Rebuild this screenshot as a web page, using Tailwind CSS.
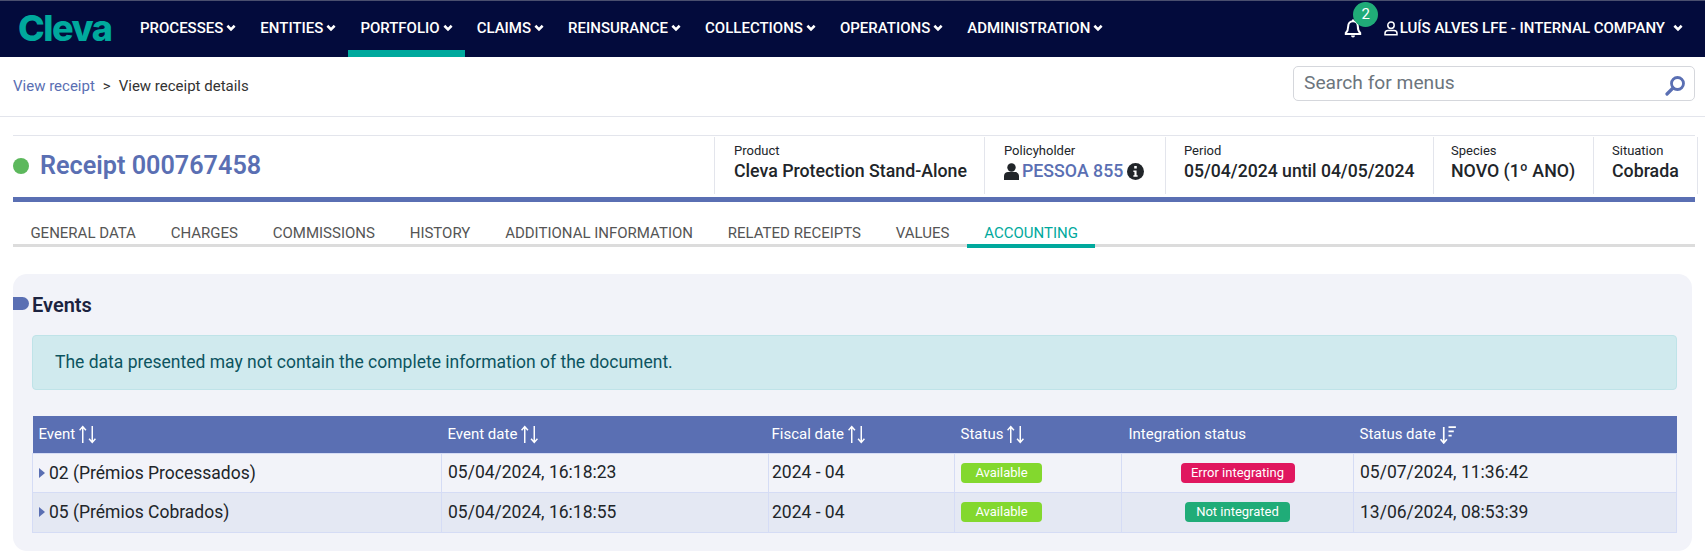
<!DOCTYPE html>
<html><head><meta charset="utf-8">
<script src="https://cdn.jsdelivr.net/npm/@tailwindcss/browser@4"></script>
</head>
<body class="bg-white font-['Roboto',sans-serif] text-[#212529] w-[1705px] h-[555px] overflow-hidden">
<nav class="h-[57px] bg-[#030b3c] border-t border-[#4a4f6e] flex items-start relative">
  <div class="w-[128px] pl-[18px] h-[56px] flex items-center font-['Inter',sans-serif] font-extrabold text-[36px] tracking-[-1.5px] text-[#00a99d] pb-[3px]">Cleva</div>
  <div class="flex text-white text-[15px] font-medium h-[56px]">
    <a class="px-3 h-full flex items-center gap-[3px] pb-[1px]">PROCESSES<svg width="10" height="8" viewBox="0 0 11 8" class="mt-[-2px]"><path d="M1.500 1.500l4 4 4-4" fill="none" stroke="#fff" stroke-width="2.800"/></svg></a>
    <a class="px-3 h-full flex items-center gap-[3px] pb-[1px]">ENTITIES<svg width="10" height="8" viewBox="0 0 11 8" class="mt-[-2px]"><path d="M1.500 1.500l4 4 4-4" fill="none" stroke="#fff" stroke-width="2.800"/></svg></a>
    <a class="px-3 h-full flex items-center gap-[3px] pt-[6px] border-b-[7px] border-[#00a99d]">PORTFOLIO<svg width="10" height="8" viewBox="0 0 11 8" class="mt-[-2px]"><path d="M1.500 1.500l4 4 4-4" fill="none" stroke="#fff" stroke-width="2.800"/></svg></a>
    <a class="px-3 h-full flex items-center gap-[3px] pb-[1px]">CLAIMS<svg width="10" height="8" viewBox="0 0 11 8" class="mt-[-2px]"><path d="M1.500 1.500l4 4 4-4" fill="none" stroke="#fff" stroke-width="2.800"/></svg></a>
    <a class="px-3 h-full flex items-center gap-[3px] pb-[1px]">REINSURANCE<svg width="10" height="8" viewBox="0 0 11 8" class="mt-[-2px]"><path d="M1.500 1.500l4 4 4-4" fill="none" stroke="#fff" stroke-width="2.800"/></svg></a>
    <a class="px-3 h-full flex items-center gap-[3px] pb-[1px]">COLLECTIONS<svg width="10" height="8" viewBox="0 0 11 8" class="mt-[-2px]"><path d="M1.500 1.500l4 4 4-4" fill="none" stroke="#fff" stroke-width="2.800"/></svg></a>
    <a class="px-3 h-full flex items-center gap-[3px] pb-[1px]">OPERATIONS<svg width="10" height="8" viewBox="0 0 11 8" class="mt-[-2px]"><path d="M1.500 1.500l4 4 4-4" fill="none" stroke="#fff" stroke-width="2.800"/></svg></a>
    <a class="px-3 h-full flex items-center gap-[3px] pb-[1px]">ADMINISTRATION<svg width="10" height="8" viewBox="0 0 11 8" class="mt-[-2px]"><path d="M1.500 1.500l4 4 4-4" fill="none" stroke="#fff" stroke-width="2.800"/></svg></a>
  </div>
  <div class="ml-auto flex items-center h-[56px] pb-[1px] text-white text-[15px] font-medium pr-[22px]">
    <div class="relative mr-[22px]">
      <svg width="18" height="19" viewBox="0 0 18 19" class="block"><path d="M9 2.200c-3 0-4.800 2.200-4.800 5 0 4-1 5.400-2.400 6.800v.9h14.400V14c-1.400-1.400-2.400-2.800-2.400-6.800 0-2.800-1.800-5-4.800-5z" fill="none" stroke="#fff" stroke-width="2"/><path d="M7 16.500a2 2 0 0 0 4 0z" fill="#fff"/><rect x="8" y="0.500" width="2" height="2.500" fill="#fff"/></svg>
      <span class="absolute left-[9.500px] top-[-17px] w-[25px] h-[25px] rounded-full bg-[#20ac78] text-[15px] font-normal flex items-center justify-center">2</span>
    </div>
    <svg width="14" height="15" viewBox="0 0 14 15" class="mr-[2px]"><circle cx="7" cy="4.200" r="3.200" fill="none" stroke="#fff" stroke-width="1.500"/><path d="M1 13.800v-1.300c0-2 1.600-3 3-3h6c1.400 0 3 1 3 3v1.300z" fill="none" stroke="#fff" stroke-width="1.500"/></svg>
    <span>LUÍS ALVES LFE - INTERNAL COMPANY</span>
    <svg width="10" height="8" viewBox="0 0 11 8" class="ml-[8px] mt-[-2px]"><path d="M1.500 1.500l4 4 4-4" fill="none" stroke="#fff" stroke-width="2.800"/></svg>
  </div>
</nav>
<div class="h-[59px] border-b border-[#e3e5ec] flex items-center justify-between pl-[13px] pr-[10px] box-content">
  <div class="text-[15px] flex items-center pb-[1px]"><span class="text-[#5a6fb3]">View receipt</span><span class="mx-[8px] text-[#333]">&gt;</span><span class="text-[#333]">View receipt details</span></div>
  <div class="w-[402px] h-[35px] border border-[#d5d7dc] rounded-[5px] flex items-center justify-between pl-[10px] pr-[8px] text-[19.200px] text-[#6c757d] mb-[6px]">Search for menus
    <svg width="21" height="21" viewBox="0 0 21 21" class="mt-[4px]"><circle cx="12.500" cy="8.500" r="6" fill="none" stroke="#5a6fb3" stroke-width="2.800"/><path d="M8 13l-6 6" stroke="#5a6fb3" stroke-width="3.200" stroke-linecap="round"/></svg>
  </div>
</div>
<section class="ml-[13px] mr-[10px] mt-[18px] border-t border-[#e3e5ec] border-b-[5px] border-b-[#5a6fb3] h-[67px] flex items-stretch box-border">
  <div class="w-[701px] shrink-0 flex items-center pb-[2px]">
    <span class="w-[16px] h-[16px] rounded-full bg-[#5cb85c]"></span>
    <span class="ml-[11px] text-[25.200px] font-semibold text-[#5a6fb3]">Receipt 000767458</span>
  </div>
  <div class="flex items-center h-[57px] border-l border-[#e3e5ec] mt-[1px]">
    <div class="w-[270px] shrink-0 pl-[19px] border-r border-[#e3e5ec] h-full pt-[6px]"><p class="text-[13px] leading-[15px]">Product</p><p class="text-[17.750px] leading-[20px] mt-[3px] font-medium">Cleva Protection Stand-Alone</p></div>
    <div class="w-[181px] shrink-0 pl-[19px] border-r border-[#e3e5ec] h-full pt-[6px]"><p class="text-[13px] leading-[15px]">Policyholder</p><p class="text-[17.750px] leading-[20px] mt-[3px] font-medium text-[#5a6fb3] flex items-center gap-[3px]"><svg width="15" height="17" viewBox="0 0 15 17"><circle cx="7.500" cy="4.500" r="4.200" fill="#212529"/><path d="M0 17v-4c0-2.500 2-4 4-4h7c2 0 4 1.500 4 4v4z" fill="#212529"/></svg>PESSOA 855<svg width="17" height="17" viewBox="0 0 16 16" class="ml-[1px]"><circle cx="8" cy="8" r="8" fill="#212529"/><rect x="6.800" y="2.800" width="2.400" height="2.400" fill="#fff"/><path d="M6 7h3v4.500h1v1.500H6v-1.500h1V8.500H6z" fill="#fff"/></svg></p></div>
    <div class="w-[268px] shrink-0 pl-[18px] border-r border-[#e3e5ec] h-full pt-[6px]"><p class="text-[13px] leading-[15px]">Period</p><p class="text-[17.600px] leading-[20px] mt-[3px] font-medium">05/04/2024 until 04/05/2024</p></div>
    <div class="w-[160px] shrink-0 pl-[17px] border-r border-[#e3e5ec] h-full pt-[6px]"><p class="text-[13px] leading-[15px]">Species</p><p class="text-[17.750px] leading-[20px] mt-[3px] font-medium">NOVO (1º ANO)</p></div>
    <div class="w-[104px] shrink-0 pl-[18px] border-r border-[#e3e5ec] h-full pt-[6px]"><p class="text-[13px] leading-[15px]">Situation</p><p class="text-[17.750px] leading-[20px] mt-[3px] font-medium">Cobrada</p></div>
  </div>
</section>
<div class="ml-[13px] mr-[10px] mt-[17px] h-[28px] border-b-[3px] border-[#dcdcdc] flex text-[15px] text-[#555]">
  <a class="px-[17.400px] h-[28px] leading-[28px]">GENERAL DATA</a>
  <a class="px-[17.400px] h-[28px] leading-[28px]">CHARGES</a>
  <a class="px-[17.400px] h-[28px] leading-[28px]">COMMISSIONS</a>
  <a class="px-[17.400px] h-[28px] leading-[28px]">HISTORY</a>
  <a class="px-[17.400px] h-[28px] leading-[28px]">ADDITIONAL INFORMATION</a>
  <a class="px-[17.400px] h-[28px] leading-[28px]">RELATED RECEIPTS</a>
  <a class="px-[17.400px] h-[28px] leading-[28px]">VALUES</a>
  <a class="px-[17.400px] h-[29px] leading-[28px] border-b-[4px] border-[#00a99d] text-[#00a99d]">ACCOUNTING</a>
</div>
<main class="mx-[13px] mt-[27px] h-[277px] w-[1679px] bg-[#f2f3f9] rounded-[14px] relative pt-[22px]">
  <div class="flex items-center h-[18px]">
    <span class="w-[16px] h-[13px] bg-[#5a6fb3] rounded-r-[7px] mt-[-3px]"></span>
    <h2 class="ml-[3px] text-[20px] font-semibold text-[#1c2340]">Events</h2>
  </div>
  <div class="mx-[19px] mt-[21px] w-[1645px] h-[55px] bg-[#d0eaee] border border-[#bfe3e8] rounded-[4px] flex items-center pl-[22px] text-[17.500px] text-[#0c5460]">The data presented may not contain the complete information of the document.</div>
  <table class="ml-[19px] mt-[26px] w-[1645px] table-fixed border-collapse text-[17.500px] text-[#212529]">
    <colgroup><col class="w-[409px]"><col class="w-[327px]"><col class="w-[186px]"><col class="w-[167px]"><col class="w-[232px]"><col></colgroup>
    <thead>
      <tr class="h-[37px] bg-[#5a6fb3] text-white text-[15px] text-left">
        <th class="font-normal pl-[6px]"><span class="inline-flex items-center gap-[3px]">Event <svg width="19" height="19" viewBox="0 0 18 18"><path d="M4.500 17V2M1.500 5l3-3.500 3 3.500M13.500 1v15M10.500 13l3 3.500 3-3.500" fill="none" stroke="#fff" stroke-width="1.400"/></svg></span></th>
        <th class="font-normal pl-[6px]"><span class="inline-flex items-center gap-[3px]">Event date <svg width="19" height="19" viewBox="0 0 18 18"><path d="M4.500 17V2M1.500 5l3-3.500 3 3.500M13.500 1v15M10.500 13l3 3.500 3-3.500" fill="none" stroke="#fff" stroke-width="1.400"/></svg></span></th>
        <th class="font-normal pl-[3px]"><span class="inline-flex items-center gap-[3px]">Fiscal date <svg width="19" height="19" viewBox="0 0 18 18"><path d="M4.500 17V2M1.500 5l3-3.500 3 3.500M13.500 1v15M10.500 13l3 3.500 3-3.500" fill="none" stroke="#fff" stroke-width="1.400"/></svg></span></th>
        <th class="font-normal pl-[6px]"><span class="inline-flex items-center gap-[3px]">Status <svg width="19" height="19" viewBox="0 0 18 18"><path d="M4.500 17V2M1.500 5l3-3.500 3 3.500M13.500 1v15M10.500 13l3 3.500 3-3.500" fill="none" stroke="#fff" stroke-width="1.400"/></svg></span></th>
        <th class="font-normal pl-[7px]">Integration status</th>
        <th class="font-normal pl-[6px]"><span class="inline-flex items-center gap-[3px]">Status date <svg width="19" height="19" viewBox="0 0 18 18"><path d="M4.500 17V2M1.500 13.500l3 3.500 3-3.500M9 2h7M9 6h5M9 10h3" fill="none" stroke="#fff" stroke-width="1.600"/></svg></span></th>
      </tr>
    </thead>
    <tbody>
      <tr class="h-[39px] bg-[#f2f3f9]">
        <td class="border border-[#d5dcf5] pl-[6px]"><span class="inline-flex items-center gap-[4px]"><svg width="6" height="10" viewBox="0 0 6 10"><path d="M0 0l6 5-6 5z" fill="#5a6fb3"/></svg>02 (Prémios Processados)</span></td>
        <td class="border border-[#d5dcf5] pl-[6px]">05/04/2024, 16:18:23</td>
        <td class="border border-[#d5dcf5] pl-[3px]">2024 - 04</td>
        <td class="border border-[#d5dcf5] pl-[6px]"><span class="block w-[81px] h-[20px] rounded-[4px] bg-[#83d82e] text-white text-[13px] text-center leading-[20px]">Available</span></td>
        <td class="border border-[#d5dcf5]"><span class="block mx-auto w-[114px] h-[20px] rounded-[4px] bg-[#e0175f] text-white text-[13px] text-center leading-[20px]">Error integrating</span></td>
        <td class="border border-[#d5dcf5] pl-[6px]">05/07/2024, 11:36:42</td>
      </tr>
      <tr class="h-[40px] bg-[#e4e8f3]">
        <td class="border border-[#d5dcf5] pl-[6px]"><span class="inline-flex items-center gap-[4px]"><svg width="6" height="10" viewBox="0 0 6 10"><path d="M0 0l6 5-6 5z" fill="#5a6fb3"/></svg>05 (Prémios Cobrados)</span></td>
        <td class="border border-[#d5dcf5] pl-[6px]">05/04/2024, 16:18:55</td>
        <td class="border border-[#d5dcf5] pl-[3px]">2024 - 04</td>
        <td class="border border-[#d5dcf5] pl-[6px]"><span class="block w-[81px] h-[20px] rounded-[4px] bg-[#83d82e] text-white text-[13px] text-center leading-[20px]">Available</span></td>
        <td class="border border-[#d5dcf5]"><span class="block mx-auto w-[105px] h-[20px] rounded-[4px] bg-[#20ac78] text-white text-[13px] text-center leading-[20px]">Not integrated</span></td>
        <td class="border border-[#d5dcf5] pl-[6px]">13/06/2024, 08:53:39</td>
      </tr>
    </tbody>
  </table>
</main>
</body></html>
